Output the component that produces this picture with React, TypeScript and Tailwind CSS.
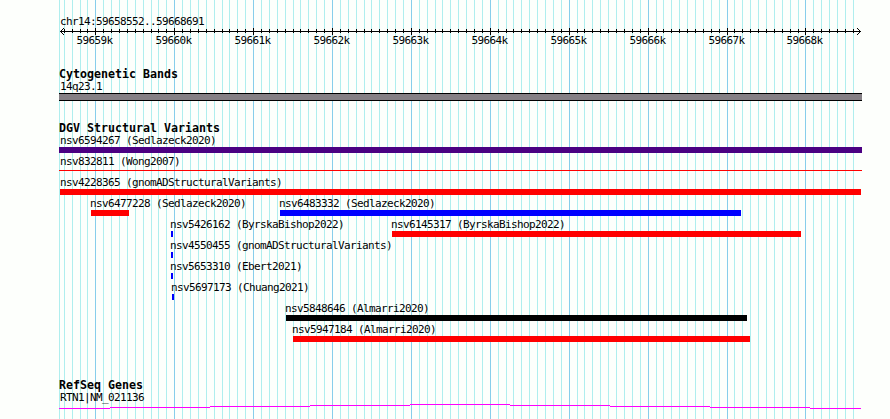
interface Feature {
  name: string;
  start: number;
  end: number;
  color: string;
  labelShift?: string;
  thin?: boolean;
}

const REGION_START = 59658552;
const REGION_END = 59668691;
const PANEL_LEFT = 60;
const PANEL_WIDTH = 800;

const toX = (bp: number) =>
  Math.round(PANEL_LEFT + ((bp - REGION_START) * PANEL_WIDTH) / (REGION_END - REGION_START + 1));

const ticks = Array.from({ length: 101 }, (_, i) => 59658600 + i * 100)
  .filter((bp) => bp <= REGION_END)
  .map((bp) => ({ bp, x: toX(bp), major: bp % 1000 === 0 }));

const labelStyle =
  "h-3 font-['DejaVu_Sans_Mono',monospace] text-[11px] leading-[14px] tracking-[-0.622px] whitespace-pre";

const variantRows: Feature[][] = [
  [{ name: 'nsv6594267 (Sedlazeck2020)', start: 59, end: 862, color: 'bg-[#4b0082]', labelShift: 'ml-px' }],
  [{ name: 'nsv832811 (Wong2007)', start: 59, end: 862, color: 'bg-[#ff0000]', labelShift: 'ml-px', thin: true }],
  [{ name: 'nsv4228365 (gnomADStructuralVariants)', start: 60, end: 861, color: 'bg-[#ff0000]', labelShift: 'ml-0' }],
  [
    { name: 'nsv6477228 (Sedlazeck2020)', start: 91, end: 129, color: 'bg-[#ff0000]' },
    { name: 'nsv6483332 (Sedlazeck2020)', start: 280, end: 741, color: 'bg-[#0000ff]' },
  ],
  [
    { name: 'nsv5426162 (ByrskaBishop2022)', start: 171, end: 173, color: 'bg-[#0000ff]' },
    { name: 'nsv6145317 (ByrskaBishop2022)', start: 392, end: 801, color: 'bg-[#ff0000]' },
  ],
  [{ name: 'nsv4550455 (gnomADStructuralVariants)', start: 171, end: 173, color: 'bg-[#0000ff]' }],
  [{ name: 'nsv5653310 (Ebert2021)', start: 171, end: 173, color: 'bg-[#0000ff]' }],
  [{ name: 'nsv5697173 (Chuang2021)', start: 172, end: 174, color: 'bg-[#0000ff]' }],
  [{ name: 'nsv5848646 (Almarri2020)', start: 286, end: 747, color: 'bg-black' }],
  [{ name: 'nsv5947184 (Almarri2020)', start: 293, end: 750, color: 'bg-[#ff0000]' }],
];

function GridLines() {
  return (
    <svg className="absolute inset-0" width="890" height="419" shapeRendering="crispEdges">
      <rect x="59" y="0" width="1" height="419" fill="#afeeee" />
      {ticks.map((t) => (
        <rect key={t.bp} x={t.x} y="0" width="1" height="419" fill={t.major ? '#87ceeb' : '#afeeee'} />
      ))}
    </svg>
  );
}

function Ruler() {
  return (
    <svg className="block" width="890" height="21">
      <g shapeRendering="crispEdges">
        <rect x="60" y="4" width="801" height="1" />
        {ticks.map((t) => (
          <rect key={t.bp} x={t.x} y={t.major ? 1 : 2} width="1" height={t.major ? 7 : 4} />
        ))}
        {[1, 2, 3].map((d) => (
          <g key={d}>
            <rect x={60 + d} y={4 - d} width="1" height="1" />
            <rect x={60 + d} y={4 + d} width="1" height="1" />
            <rect x={860 - d} y={4 - d} width="1" height="1" />
            <rect x={860 - d} y={4 + d} width="1" height="1" />
          </g>
        ))}
      </g>
      {ticks
        .filter((t) => t.major)
        .map((t) => (
          <text key={t.bp} x={t.x - 18.5} y="17" className={labelStyle}>
            {`${t.bp / 1000}k`}
          </text>
        ))}
    </svg>
  );
}

function TrackTitle({ children }: { children: string }) {
  return (
    <h2 className="ml-[59px] font-['DejaVu_Sans_Mono',monospace] text-[11.63px] leading-[12px] font-bold whitespace-pre">
      {children}
    </h2>
  );
}

function FeatureRow({ features }: { features: Feature[] }) {
  return (
    <div className="flex h-[21px]">
      {features.map((f, i) => (
        <div
          key={f.name}
          className="flex-none"
          style={{ marginLeft: f.start - (i > 0 ? features[i - 1].end : 0), width: f.end - f.start }}
        >
          <div className={`${labelStyle} ${f.labelShift ?? '-ml-px'}`}>{f.name}</div>
          <div className={`${f.thin ? 'mt-[3px] h-px' : 'mt-px h-1.5'} ${f.color}`} />
        </div>
      ))}
    </div>
  );
}

export default function App() {
  return (
    <div className="relative h-[419px] w-[890px] overflow-hidden bg-[#fdfffc] text-black">
      <GridLines />
      <div className="relative pt-[15px]">
        <div className={`ml-[60px] ${labelStyle}`}>chr14:59658552..59668691</div>
        <Ruler />

        <section className="mt-5">
          <TrackTitle>Cytogenetic Bands</TrackTitle>
          <div className={`ml-[60px] ${labelStyle}`}>14q23.1</div>
          <div className="mt-px ml-[59px] h-2 w-[803px] border-y border-black bg-[#858085]" />
        </section>

        <section className="mt-[21px]">
          <TrackTitle>DGV Structural Variants</TrackTitle>
          {variantRows.map((row) => (
            <FeatureRow key={row[0].name} features={row} />
          ))}
        </section>

        <section className="mt-[35px]">
          <TrackTitle>RefSeq Genes</TrackTitle>
          <div className={`ml-[60px] ${labelStyle}`}>RTN1|NM_021136</div>
          {/* intron arc, stepped one pixel at a time */}
          <svg className="block" width="890" height="8" shapeRendering="crispEdges">
            <path
              d="M59 5.5H110M110 4.5H210M210 3.5H310M310 2.5H410M410 1.5H510M510 2.5H610M610 3.5H710M710 4.5H810M810 5.5H861"
              stroke="#ff00ff"
            />
          </svg>
        </section>
      </div>
    </div>
  );
}
